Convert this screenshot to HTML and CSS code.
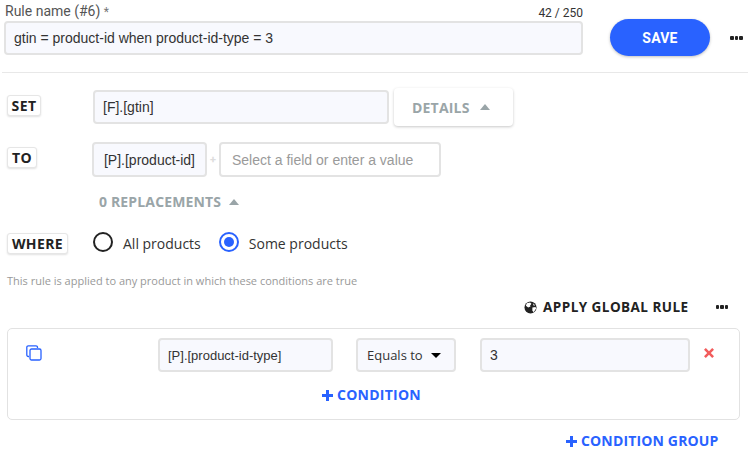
FILE: index.html
```html
<!DOCTYPE html>
<html lang="en">
<head>
<meta charset="utf-8">
<title>Rule</title>
<link rel="stylesheet" href="styles.css">
</head>
<body>
<header class="top">
  <div class="name-col">
    <div class="name-labels">
      <span class="name-label">Rule name (#6) <span class="req">*</span></span>
      <span class="count">42 / 250</span>
    </div>
    <div class="field name-field">gtin = product-id when product-id-type = 3</div>
  </div>
  <button class="save">SAVE</button>
  <span class="dots top-dots"><i></i><i></i><i></i></span>
</header>
<section class="row set-row">
  <span class="badge">SET</span>
  <div class="field set-field">[F].[gtin]</div>
  <button class="details">DETAILS <svg class="tri" width="10" height="6" viewBox="0 0 10 6"><path d="M0 6 5 0l5 6z"/></svg></button>
</section>
<section class="row to-row">
  <span class="badge">TO</span>
  <div class="field to-field">[P].[product-id]</div>
  <span class="plus-sep">+</span>
  <div class="field empty-field">Select a field or enter a value</div>
</section>
<div class="replacements">0 REPLACEMENTS <svg class="tri" width="10" height="6" viewBox="0 0 10 6"><path d="M0 6 5 0l5 6z"/></svg></div>
<section class="row where-row">
  <span class="badge">WHERE</span>
  <label class="radio-item all"><span class="radio"></span>All products</label>
  <label class="radio-item"><span class="radio on"></span>Some products</label>
</section>
<p class="hint">This rule is applied to any product in which these conditions are true</p>
<div class="global">
  <svg class="globe" width="13" height="13" viewBox="0 0 14 14"><circle cx="7" cy="7" r="6.500" fill="#222"/><path d="M3 2.500 6.500 1.600 8 3 6.500 5 7 6 4.500 7 2 5zM9 7l3.500-.5.5 1.500-2.500 4L9 10.500zM9.500 2.500 12 4.500 10.500 5z" fill="#fff"/></svg>
  <span class="global-text">APPLY GLOBAL RULE</span>
  <span class="dots global-dots"><i></i><i></i><i></i></span>
</div>
<section class="panel">
  <div class="cond-row">
    <svg class="copy" width="16" height="16" viewBox="0 0 16 16" fill="none" stroke="#2962ff" stroke-width="1.300"><path d="M3 11.500H2.300A1.500 1.500 0 0 1 .8 10V2.300A1.500 1.500 0 0 1 2.300.8H10A1.500 1.500 0 0 1 11.500 2.300V3"/><rect x="4" y="4" width="11" height="11" rx="1.500"/></svg>
    <div class="field cond-field">[P].[product-id-type]</div>
    <div class="field select-field">Equals to <svg class="caret" width="10" height="5" viewBox="0 0 10 5"><path d="M0 0h10L5 5z"/></svg></div>
    <div class="field value-field">3</div>
    <svg class="remove" width="10" height="10" viewBox="0 0 10 10"><path d="M1.800 0 5 3.200 8.200 0 10 1.800 6.800 5 10 8.200 8.200 10 5 6.800 1.800 10 0 8.200 3.200 5 0 1.800z"/></svg>
  </div>
  <div class="add add-cond"><svg class="plus" width="11" height="11" viewBox="0 0 11 11"><path d="M4 0h3v4h4v3H7v4H4V7H0V4h4z"/></svg>CONDITION</div>
</section>
<div class="add add-group"><svg class="plus" width="11" height="11" viewBox="0 0 11 11"><path d="M4 0h3v4h4v3H7v4H4V7H0V4h4z"/></svg>CONDITION GROUP</div>
</body>
</html>
```
FILE: styles.css
```css
* { box-sizing: border-box; }
html, body { margin: 0; padding: 0; }
body { width: 748px; height: 454px; overflow: hidden; background: #fff; color: #222; font-family: Roboto, sans-serif; position: relative; }
.top { display: flex; align-items: flex-end; height: 73px; padding: 4px 0 17px 2px; margin-left: 2px; border-bottom: 1px solid #e8e8e8; }
.name-col { width: 579px; }
.name-labels { display: flex; justify-content: space-between; height: 17px; }
.name-label { font-size: 14px; color: #555; padding-left: 1px; line-height: 15px; }
.req { color: #777; font-size: 12px; }
.count { font-size: 12px; color: #333; line-height: 19px; }
.field { border: 2px solid #e3e3e3; border-radius: 4px; background: #f8f9fe; font: 400 14px "Liberation Sans", sans-serif; display: flex; align-items: center; color: #333; }
.name-field { height: 34px; padding-left: 8px; }
.save { width: 100px; height: 37px; margin-left: 27px; margin-bottom: -1px; border: 0; border-radius: 19px; background: #2962ff; color: #fff; font: 700 14px Roboto, sans-serif; box-shadow: 0 1px 3px rgba(0,0,0,.25); letter-spacing: .2px; }
.dots { display: flex; gap: 1px; }
.dots i { width: 3.500px; height: 4px; background: #222; border-radius: 1px; }
.top-dots { margin-left: 20px; margin-bottom: 15px; }
.row { display: flex; align-items: center; padding-left: 7px; }
.badge { font: 700 14px "Open Sans", sans-serif; letter-spacing: .4px; color: #222; background: #fff; border: 1px solid #e6e6e6; border-radius: 3px; box-shadow: 0 1px 2px rgba(0,0,0,.12); height: 21px; display: flex; align-items: center; justify-content: center; }
.set-row { margin-top: 15px; height: 38px; }
.set-row .badge { margin-top: -4px; width: 34px; }
.set-field { width: 296px; height: 34px; margin-left: 52px; padding-left: 8px; }
.details { width: 119px; height: 38px; margin-left: 5px; border: 0; border-radius: 4px; background: #fff; box-shadow: 0 1px 3px rgba(0,0,0,.22); font: 700 14px "Open Sans", sans-serif; letter-spacing: .2px; color: #9aa5a8; display: flex; align-items: center; justify-content: flex-start; padding-left: 18px; gap: 10px; }
.tri { fill: #9aa5a8; }
.to-row { margin-top: 16px; height: 35px; }
.to-row .badge { margin-top: -4px; width: 30px; }
.to-field { width: 115px; height: 35px; margin-left: 55px; justify-content: center; }
.plus-sep { width: 12px; text-align: center; font: 700 11px Roboto, sans-serif; color: #ddd; }
.empty-field { width: 222px; height: 35px; background: #fff; color: #9a9a9a; padding-left: 11px; }
.replacements { margin: 16px 0 0 99px; height: 18px; font: 700 14px/18px "Open Sans", sans-serif; letter-spacing: .15px; color: #9aa5a8; display: flex; align-items: center; gap: 8px; }
.where-row { margin-top: 21px; height: 22px; }
.where-row .badge { width: 61px; }
.radio-item { display: flex; align-items: center; font: 400 14px "Open Sans", sans-serif; color: #333; }
.all { margin-left: 25px; margin-right: 18px; }
.radio { width: 20px; height: 20px; border: 2px solid #222; border-radius: 50%; margin-right: 10px; margin-top: -2px; background: #fff; }
.radio.on { border-color: #2962ff; padding: 3px; background: #2962ff content-box; }
.hint { margin: 20px 0 0 7px; font: 400 11px/14px "Open Sans", sans-serif; color: #999; }
.global { display: flex; align-items: center; justify-content: flex-end; height: 20px; margin-top: 9px; padding-right: 20px; }
.global-text { font: 700 13.500px "Open Sans", sans-serif; letter-spacing: .45px; color: #222; margin-left: 6px; }
.global-dots { margin-left: 27px; }
.panel { margin: 11px 8px 0 7px; height: 92px; border: 1px solid #e2e2e2; border-radius: 5px; padding: 9px 0 0 18px; }
.cond-row { display: flex; align-items: flex-start; }
.copy { margin-top: 7px; margin-bottom: 1px; }
.cond-field { width: 175px; height: 34px; margin-left: 116px; padding-left: 8px; font-size: 13px; }
.select-field { width: 100px; height: 34px; margin-left: 23px; padding-left: 9px; font: 400 13px "Open Sans", sans-serif; gap: 8px; }
.value-field { width: 210px; height: 34px; margin-left: 24px; padding-left: 8px; }
.remove { fill: #f25c5c; margin: 10px 0 0 14px; }
.add { display: flex; align-items: center; gap: 4px; font: 700 14px/18px "Open Sans", sans-serif; letter-spacing: .25px; color: #2962ff; }
.plus { fill: #2962ff; }
.add-cond { margin: 14px 0 0 296px; }
.add-group { margin: 12px 0 0 566px; letter-spacing: .15px; }
```
